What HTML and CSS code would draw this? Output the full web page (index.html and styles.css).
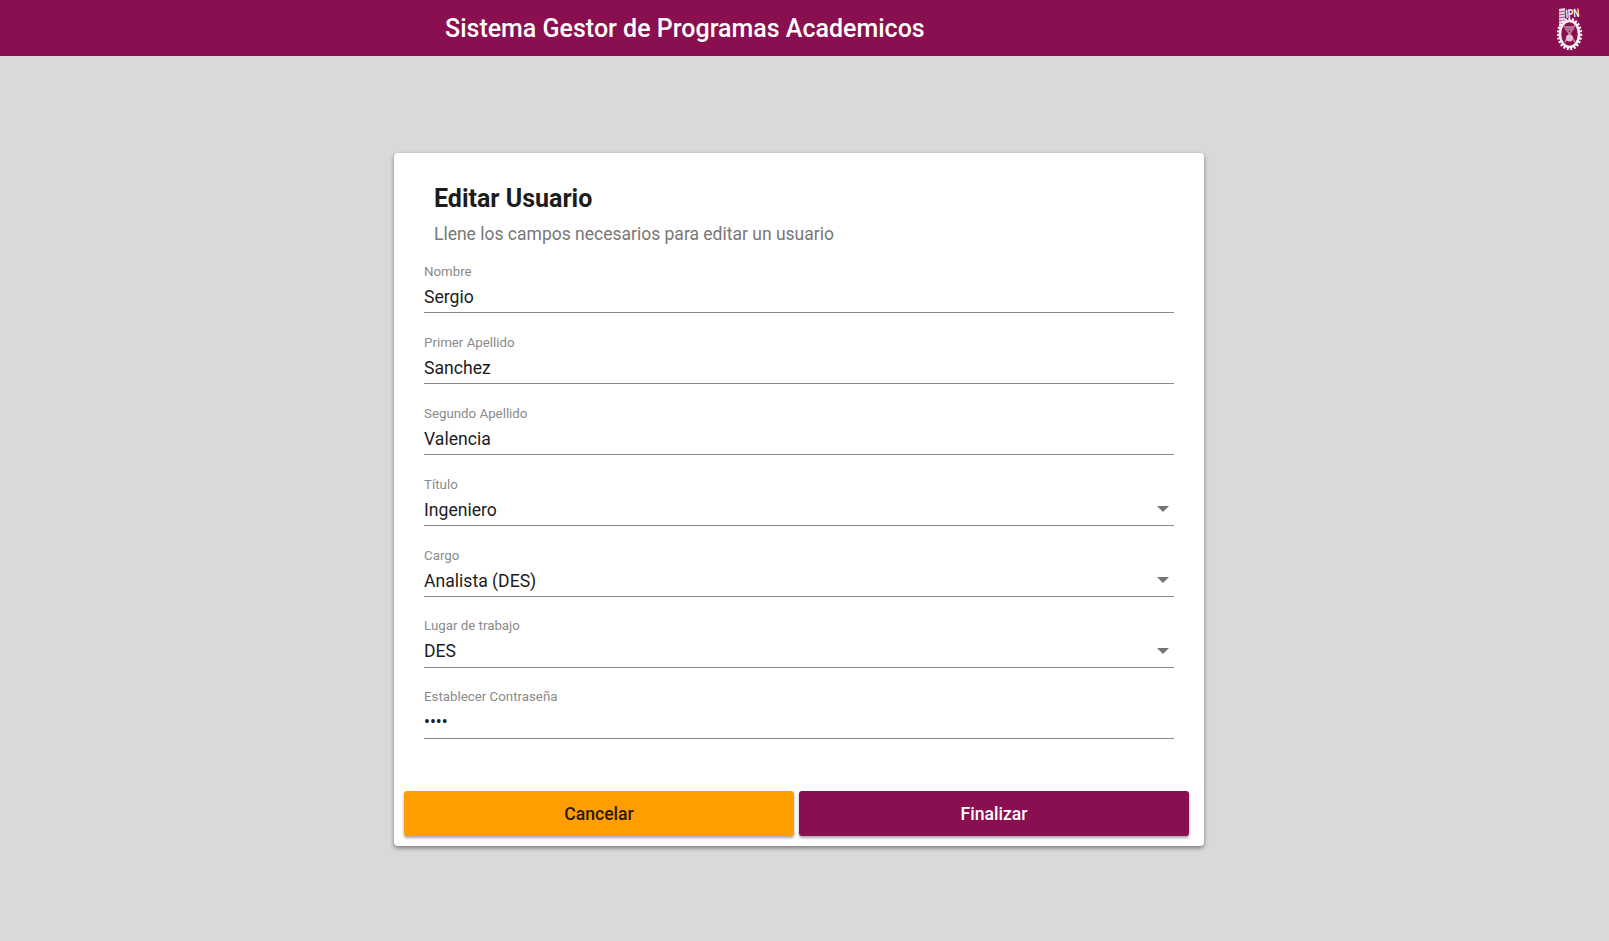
FILE: index.html
```html
<!DOCTYPE html>
<html lang="es">
<head>
  <meta charset="UTF-8">
  <title>Sistema Gestor de Programas Academicos</title>
  <link rel="stylesheet" href="styles.css">
</head>
<body>
  <header class="topbar">
    <span class="topbar-title">Sistema Gestor de Programas Academicos</span>
    <svg class="logo" width="26" height="46" viewBox="0 0 26 46">
      <path d="M2 4l6-1v15l-6 4z" fill="#e9d3df"/>
      <path d="M2 7l6-1M2 10l6-1M2 13l6-1M2 16l6-1M2 19l6-1" stroke="#a94f7f" stroke-width="1"/>
      <text class="logo-text" transform="translate(9 13) rotate(-5) scale(.68 1)">IPN</text>
      <ellipse cx="12.5" cy="29" rx="9.5" ry="13" fill="none" stroke="#f6ecf1" stroke-width="2.5"/>
      <ellipse cx="12.5" cy="29" rx="11.5" ry="15" fill="none" stroke="#fff" stroke-width="2.5" stroke-dasharray="2 1.6"/>
      <path d="M7 21l11 16M18 20L8 37" stroke="#c58aa9" stroke-width="1.5"/>
      <circle cx="12.5" cy="33" r="3.5" fill="#e2c4d4"/>
      <path d="M7 21h11l-2 5H9z" fill="#b56f95"/>
    </svg>
  </header>

  <main class="page">
    <form class="card">
      <h1 class="card-title">Editar Usuario</h1>
      <p class="card-subtitle">Llene los campos necesarios para editar un usuario</p>

      <div class="field">
        <label class="field-label">Nombre</label>
        <input class="field-input" type="text" value="Sergio">
      </div>
      <div class="field">
        <label class="field-label">Primer Apellido</label>
        <input class="field-input" type="text" value="Sanchez">
      </div>
      <div class="field">
        <label class="field-label">Segundo Apellido</label>
        <input class="field-input" type="text" value="Valencia">
      </div>
      <div class="field field-dropdown">
        <label class="field-label">Título</label>
        <select class="field-input field-select"><option>Ingeniero</option></select>
      </div>
      <div class="field field-dropdown">
        <label class="field-label">Cargo</label>
        <select class="field-input field-select"><option>Analista (DES)</option></select>
      </div>
      <div class="field field-dropdown">
        <label class="field-label">Lugar de trabajo</label>
        <select class="field-input field-select"><option>DES</option></select>
      </div>
      <div class="field">
        <label class="field-label">Establecer Contraseña</label>
        <input class="field-input" type="password" value="1234">
      </div>

      <div class="actions">
        <button class="btn btn-cancel" type="button">Cancelar</button>
        <button class="btn btn-finish" type="button">Finalizar</button>
      </div>
    </form>
  </main>
</body>
</html>
```

FILE: styles.css
```css
* {
  box-sizing: border-box;
}

body {
  margin: 0;
  min-height: 100vh;
  background-color: #d9d9d9;
  font-family: Roboto, Arial, sans-serif;
}

.topbar {
  display: flex;
  align-items: center;
  justify-content: space-between;
  height: 56px;
  padding: 0 26px 0 445px;
  background-color: #8a0f50;
  color: white;
}

.topbar-title {
  font-size: 25px;
  font-weight: 500;
}

.logo {
  display: block;
}

.logo-text {
  font-family: "Liberation Sans", Arial, sans-serif;
  font-size: 12px;
  font-weight: 700;
  fill: white;
}

.page {
  display: flex;
  justify-content: center;
  padding-top: 97px;
  padding-right: 11px;
}

.card {
  width: 810px;
  height: 693px;
  padding: 31px 30px 0;
  background-color: white;
  border-radius: 4px;
  box-shadow: 0 2px 4px rgba(0, 0, 0, 0.45);
}

.card-title {
  margin: 0 0 0 10px;
  height: 30px;
  font-size: 25px;
  line-height: 30px;
  font-weight: 700;
  color: #1c1c1c;
}

.card-subtitle {
  margin: 8px 0 0 10px;
  height: 24px;
  font-size: 17.5px;
  line-height: 24px;
  font-weight: 400;
  color: #777;
}

.field {
  position: relative;
  display: flex;
  flex-direction: column;
  height: 60px;
  margin-top: 10.9px;
  border-bottom: 1px solid #8a8a8a;
}

.card-subtitle + .field {
  margin-top: 7.2px;
}

.field-dropdown::after {
  content: "";
  position: absolute;
  right: 5px;
  bottom: 13px;
  border-top: 6px solid #757575;
  border-left: 6.5px solid transparent;
  border-right: 6.5px solid transparent;
  pointer-events: none;
}

.field-label {
  flex: none;
  height: 28.3px;
  padding-top: 10.75px;
  font-size: 13.3px;
  line-height: 16px;
  font-weight: 400;
  color: #8a8a8a;
}

.field-input {
  flex: none;
  width: 100%;
  height: 31px;
  padding: 0;
  border: none;
  outline: none;
  background-color: transparent;
  font-family: Roboto, Arial, sans-serif;
  font-size: 17.6px;
  color: #1c1c1c;
}

.field-select {
  appearance: none;
}

.actions {
  display: flex;
  gap: 5px;
  margin: 52.45px -15px 0 -20px;
}

.btn {
  flex: 1;
  height: 45px;
  padding: 2px 0 0;
  border: none;
  border-radius: 3px;
  font-family: Roboto, Arial, sans-serif;
  font-size: 17.6px;
  font-weight: 500;
  box-shadow: 0 2px 3px rgba(0, 0, 0, 0.35);
}

.btn-cancel {
  background-color: #ff9e00;
  color: #2a1a00;
}

.btn-finish {
  background-color: #8a0f50;
  color: white;
}
```
